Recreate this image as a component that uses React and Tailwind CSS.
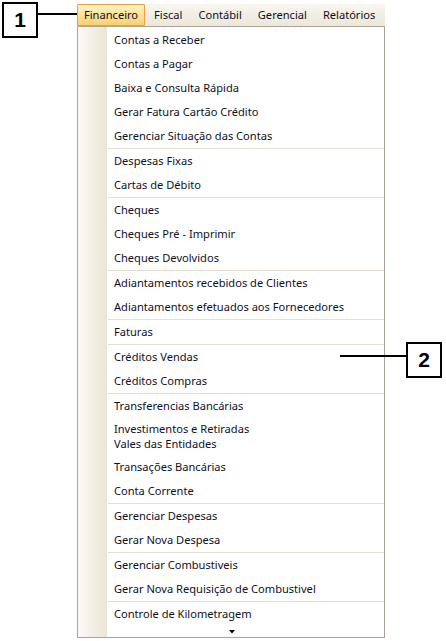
import React from 'react';

const groups = [
  ['Contas a Receber', 'Contas a Pagar', 'Baixa e Consulta Rápida', 'Gerar Fatura Cartão Crédito', 'Gerenciar Situação das Contas'],
  ['Despesas Fixas', 'Cartas de Débito'],
  ['Cheques', 'Cheques Pré - Imprimir', 'Cheques Devolvidos'],
  ['Adiantamentos recebidos de Clientes', 'Adiantamentos efetuados aos Fornecedores'],
  ['Faturas'],
  ['Créditos Vendas', 'Créditos Compras'],
  ['Transferencias Bancárias', ['Investimentos e Retiradas', 'Vales das Entidades'], 'Transações Bancárias', 'Conta Corrente'],
  ['Gerenciar Despesas', 'Gerar Nova Despesa'],
  ['Gerenciar Combustiveis', 'Gerar Nova Requisição de Combustivel'],
  ['Controle de Kilometragem'],
];

const topMenu = ['Financeiro', 'Fiscal', 'Contábil', 'Gerencial', 'Relatórios'];

const MenuItem = ({ label }) => {
  if (Array.isArray(label)) {
    return (
      <div className="flex h-[37px] pt-[3px]">
        <div className="w-[29px] shrink-0" />
        <div className="pl-[7px] leading-[15px]">
          <div className="h-[15px]">{label[0]}</div>
          <div className="h-[15px]">{label[1]}</div>
        </div>
      </div>
    );
  }
  return (
    <div className="flex h-[24px] items-center">
      <div className="w-[29px] shrink-0" />
      <span className="pl-[7px] whitespace-nowrap">{label}</span>
    </div>
  );
};

const Callout = ({ n, className }) => (
  <div className={`absolute w-[36px] h-[36px] border-2 border-black bg-white flex items-center justify-center text-[21px] font-bold text-black ${className}`}
    style={{ fontFamily: '"Liberation Sans", Arial, sans-serif' }}>
    {n}
  </div>
);

export default function App() {
  return (
    <div className="relative w-[446px] h-[641px] bg-white overflow-hidden text-[11.1px] text-[#10101c]"
      style={{ fontFamily: '"Noto Sans", "Open Sans", sans-serif' }}>
      <div className="ml-[77px] mt-[4px] w-[308px]">
        {/* menu bar */}
        <div className="flex h-[22px] items-stretch bg-gradient-to-b from-[#f8f6ef] to-[#ebe7da]">
          {topMenu.map((m, i) => (
            <div key={m}
              className={`flex items-center whitespace-nowrap ${i === 0
                ? 'px-[6px] border border-[#e5a443] bg-gradient-to-b from-[#fff3c4] to-[#fbd06b] rounded-[1px]'
                : 'px-[8px]'} ${i === 1 ? 'ml-[1px]' : ''}`}>
              {m}
            </div>
          ))}
        </div>

        {/* dropdown */}
        <div className="relative border border-[#aca499] bg-white h-[612px] pt-[1px]">
          <div className="absolute left-0 top-0 bottom-0 w-[29px] bg-gradient-to-r from-[#fbfaf6] to-[#ebe5d6]" />
          <div className="relative">
            {groups.map((g, gi) => (
              <div key={gi} className={gi > 0 ? 'border-t border-[#e6e0d3] ml-[30px]' : ''}>
                <div className={gi > 0 ? '-ml-[30px]' : ''}>
                  {g.map((label, li) => <MenuItem key={li} label={label} />)}
                </div>
              </div>
            ))}
            <div className="flex justify-center pt-[4px]">
              <svg width="6" height="4" viewBox="0 0 6 4" className="ml-[2px]">
                <path d="M0 0h6L3 3.5z" fill="#000" />
              </svg>
            </div>
          </div>
        </div>
      </div>

      {/* callout 1 */}
      <Callout n="1" className="left-[2px] top-[2px]" />
      <div className="absolute left-[38px] top-[13px] w-[39px] h-[2px] bg-black" />

      {/* callout 2 */}
      <Callout n="2" className="left-[406px] top-[342px]" />
      <div className="absolute left-[340px] top-[355px] w-[66px] h-[2px] bg-black" />
    </div>
  );
}
